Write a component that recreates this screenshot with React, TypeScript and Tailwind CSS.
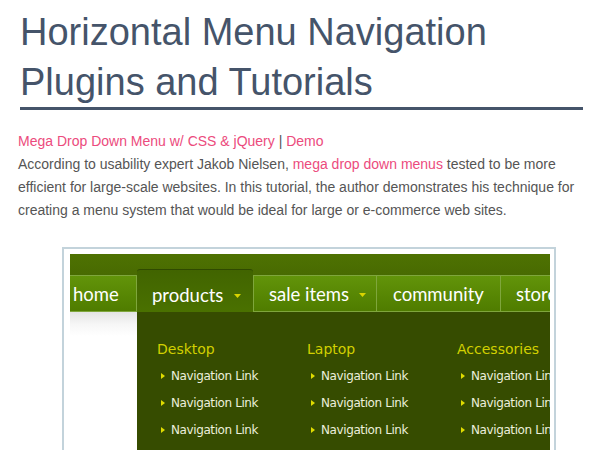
const columns = [
    { title: 'Desktop', links: ['Navigation Link', 'Navigation Link', 'Navigation Link', 'Navigation Link'] },
    { title: 'Laptop', links: ['Navigation Link', 'Navigation Link', 'Navigation Link', 'Navigation Link'] },
    { title: 'Accessories', links: ['Navigation Link', 'Navigation Link', 'Navigation Link', 'Navigation Link'] },
];

function DownArrow() {
    return (
        <svg width="7" height="4" viewBox="0 0 7 4" className="shrink-0">
            <path d="M0 0 H7 L3.5 4 Z" fill="#d9d400" />
        </svg>
    );
}

function RightArrow() {
    return (
        <svg width="4" height="6" viewBox="0 0 4 6" className="shrink-0">
            <path d="M0 0 L4 3 L0 6 Z" fill="#e0dc00" />
        </svg>
    );
}

function MenuShot() {
    const itemCls =
        'h-[37px] pt-[3px] flex items-center gap-[10px] border-y border-[#7fa63c] bg-gradient-to-b from-[#62940a] to-[#4f7c00] text-white text-[18.5px] shrink-0';

    return (
        <div className="ml-[44px] mt-[25px] w-[494px] border-2 border-[#c3d3db] pt-[5px] pl-[6px] pr-[3px] bg-white">
            <div className="w-[480px] h-[205px] overflow-hidden flex flex-col" style={{ fontFamily: 'Lato, "Open Sans", sans-serif' }}>
                {/* menu bar */}
                <div className="h-[58px] pt-[15px] flex items-end bg-gradient-to-b from-[#4e7202] to-[#3f5d00] shrink-0">
                    <div className={`${itemCls} w-[67px] pl-[3px] border-r`}>home</div>
                    <div className="h-[43px] w-[116px] pl-[15px] flex items-center gap-[11px] bg-gradient-to-b from-[#416400] to-[#4a7100] border-t border-[#2f4a00] rounded-t-[3px] text-white text-[18.5px] pt-[9px] shrink-0">
                        products <DownArrow />
                    </div>
                    <div className={`${itemCls} w-[124px] pl-[15px] border-l border-r`}>
                        sale items <DownArrow />
                    </div>
                    <div className={`${itemCls} w-[124px] pl-[16px] border-r`}>community</div>
                    <div className={`${itemCls} w-[80px] pl-[15px]`}>store</div>
                </div>

                {/* dropdown */}
                <div className="flex flex-1">
                    <div className="w-[67px] shrink-0 bg-gradient-to-b from-[#e4e4e4] via-[#f6f6f6] to-white h-[24px]" />
                    <div className="flex-1 bg-[#364c00] pl-[20px] pt-[27px] flex" style={{ fontFamily: '"DejaVu Sans", Verdana, sans-serif' }}>
                        {columns.map((col) => (
                            <div key={col.title} className="w-[150px] shrink-0">
                                <div className="text-[14px] leading-[20px] text-[#d2d000]">{col.title}</div>
                                <ul className="mt-[3px]">
                                    {col.links.map((link, i) => (
                                        <li key={i} className="h-[27px] flex items-center gap-[6px] pl-[4px] text-[12px] tracking-[-0.4px] text-[#ecefdc] whitespace-nowrap">
                                            <RightArrow />
                                            {link}
                                        </li>
                                    ))}
                                </ul>
                            </div>
                        ))}
                    </div>
                </div>
            </div>
        </div>
    );
}

export default function App() {
    return (
        <div className="w-[615px] h-[450px] overflow-hidden bg-white px-[18px] pt-[7px]" style={{ fontFamily: '"Liberation Sans", Arial, sans-serif' }}>
            <h1 className="ml-[2px] w-[563px] text-[38px] leading-[50px] text-[#45546a] border-b-[3px] border-[#45546a]">
                Horizontal Menu Navigation
                <br />
                Plugins and Tutorials
            </h1>

            <div className="mt-[20px] text-[14px] leading-[23px] text-[#555]">
                <p>
                    <a className="text-[#ec4b7d]">Mega Drop Down Menu w/ CSS &amp; jQuery</a> | <a className="text-[#ec4b7d]">Demo</a>
                </p>
                <p>
                    According to usability expert Jakob Nielsen, <a className="text-[#ec4b7d]">mega drop down menus</a> tested to be more
                    efficient for large-scale websites. In this tutorial, the author demonstrates his technique for creating a menu system
                    that would be ideal for large or e-commerce web sites.
                </p>
            </div>

            <MenuShot />
        </div>
    );
}
